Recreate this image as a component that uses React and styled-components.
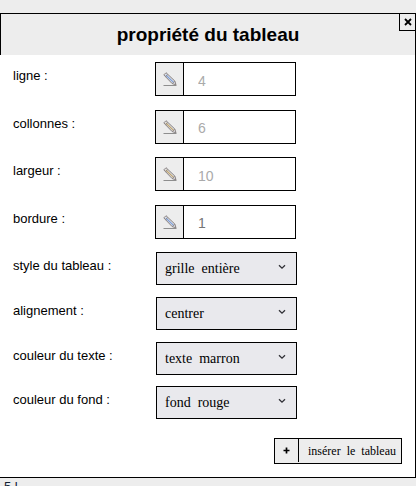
import React, { useId } from "react";
import styled, { createGlobalStyle } from "styled-components";

const GlobalStyle = createGlobalStyle`
  * { box-sizing: border-box; }
  html { background: #ededed; overflow: hidden; }
  body {
    margin: 0;
    height: 100vh;
    overflow: hidden;
    background: #ededed;
    color: #000;
    font-family: "Liberation Sans", Arial, sans-serif;
    font-size: 13px;
  }
`;

const Page = styled.main`
  padding-top: 13px;
`;

const Dialog = styled.form`
  position: relative;
  background: #fff;
  border: 1px solid #000;
  border-left: 0;
`;

const Header = styled.header`
  padding: 9px 0;
  border-left: 1px solid #000;
  background: #ededed;
`;

const Title = styled.h1`
  margin: 0;
  font-size: 19px;
  line-height: 23px;
  text-align: center;
`;

const CloseButton = styled.button`
  position: absolute;
  top: 0;
  right: 0;
  display: flex;
  align-items: center;
  justify-content: center;
  width: 16px;
  height: 17px;
  padding: 0 0 1px;
  border: solid #000;
  border-width: 0 0 1px 1px;
  background: #ededed;
`;

const Fields = styled.div`
  padding: 7px 12px 0 13px;
`;

const Group = styled.div`
  display: grid;
  grid-auto-rows: 1fr;
  min-height: ${(p) => p.$height};
`;

const Row = styled.div`
  display: grid;
  grid-template-columns: 142px 142px;
  align-items: start;
`;

const Label = styled.label`
  line-height: 28px;
`;

const InputBox = styled.div`
  display: flex;
  width: 141px;
  height: 34px;
  border: 1px solid #000;
  background: #fff;
`;

const IconCell = styled.span`
  display: flex;
  align-items: center;
  justify-content: center;
  flex: none;
  width: 28px;
  border-right: 1px solid #000;
  background: #ededed;
`;

const NumberInput = styled.input`
  flex: 1;
  min-width: 0;
  padding: 3px 8px 0 14px;
  border: 0;
  background: transparent;
  color: #757575;
  font: 14px "Liberation Sans", Arial, sans-serif;

  &::placeholder {
    color: #aaa;
    opacity: 1;
  }
`;

const SelectBox = styled.div`
  display: grid;
  margin-left: 1px;
  height: 33px;
  align-items: center;
  border: 1px solid #000;
  background: #e9e9ed;

  > * { grid-area: 1 / 1; }
  > svg { justify-self: end; margin: 0 10px 3px 0; pointer-events: none; }
`;

const Select = styled.select`
  appearance: none;
  width: 100%;
  height: 100%;
  padding: 0 28px 0 8px;
  border: 0;
  background: transparent;
  color: #000;
  font: 14px "Liberation Serif", "Times New Roman", serif;
`;

const Actions = styled.div`
  display: flex;
  justify-content: flex-end;
  padding: 7px 13px 13px;
`;

const InsertButton = styled.button`
  display: flex;
  height: 26px;
  padding: 0;
  border: 1px solid #000;
  background: #ededed;
  color: #000;
  font: 12px/24px "Liberation Serif", "Times New Roman", serif;
  white-space: pre;
`;

const PlusCell = styled.span`
  display: flex;
  align-items: center;
  justify-content: center;
  width: 24px;
  height: 23px;
  border-right: 1px solid #000;
`;

const ButtonText = styled.span`
  padding: 0 5px 0 9px;
`;

const Status = styled.footer`
  padding: 1px 4px;
  color: #123;
  line-height: 15px;
  white-space: nowrap;
`;

function Pencil({ tint }) {
  return (
    <svg width="14" height="14" viewBox="0 0 14 14" fill="none" aria-hidden="true">
      <path d="M.8 2.9 3 .7 11.8 9 13 12.8 9.2 11.6Z" fill="#e0e2e6" stroke="#878080" strokeWidth="1" />
      <path d="M2.8 3 10.8 10.6" stroke={tint} strokeWidth="1.2" />
      <path d="M4.8 2.5 2.6 4.7M11.8 9 9.2 11.6" stroke="#878080" strokeWidth=".8" />
      <path d="M.5 13.5H13.5" stroke="#8e8e8e" />
    </svg>
  );
}

function NumberField({ label, tint, ...input }) {
  const id = useId();
  return (
    <Row>
      <Label htmlFor={id}>{label}</Label>
      <InputBox>
        <IconCell><Pencil tint={tint} /></IconCell>
        <NumberInput id={id} type="text" inputMode="numeric" {...input} />
      </InputBox>
    </Row>
  );
}

function SelectField({ label, option }) {
  const id = useId();
  return (
    <Row>
      <Label htmlFor={id}>{label}</Label>
      <SelectBox>
        <Select id={id}><option>{option}</option></Select>
        <svg width="8" height="6" viewBox="0 0 8 6" fill="none" aria-hidden="true">
          <path d="m1 1.2 3 3 3-3" stroke="#303036" strokeWidth="1.3" />
        </svg>
      </SelectBox>
    </Row>
  );
}

export default function App() {
  return (
    <>
      <GlobalStyle />
      <Page>
        <Dialog onSubmit={(e) => e.preventDefault()}>
          <Header>
            <Title>propriété du tableau</Title>
          </Header>
          <CloseButton type="button" aria-label="fermer">
            <svg width="8" height="8" viewBox="0 0 8 8" aria-hidden="true">
              <path d="m1 1 6 6M7 1 1 7" stroke="#000" strokeWidth="1.8" />
            </svg>
          </CloseButton>
          <Fields>
            <Group $height="190px">
              <NumberField label="ligne :" placeholder="4" tint="#7f9fd8" />
              <NumberField label="collonnes :" placeholder="6" tint="#c0a570" />
              <NumberField label="largeur :" placeholder="10" tint="#c0a570" />
              <NumberField label="bordure :" defaultValue="1" tint="#7f9fd8" />
            </Group>
            <Group $height="179px">
              <SelectField label="style du tableau :" option={"grille\u00a0 entière"} />
              <SelectField label="alignement :" option="centrer" />
              <SelectField label="couleur du texte :" option={"texte\u00a0 marron"} />
              <SelectField label="couleur du fond :" option={"fond\u00a0 rouge"} />
            </Group>
          </Fields>
          <Actions>
            <InsertButton type="submit">
              <PlusCell>
                <svg width="7" height="7" viewBox="0 0 7 7" aria-hidden="true">
                  <path d="M3.5.5v6M.5 3.5h6" stroke="#000" strokeWidth="1.7" />
                </svg>
              </PlusCell>
              <ButtonText>{"insérer  le  tableau"}</ButtonText>
            </InsertButton>
          </Actions>
        </Dialog>
        <Status>5 l</Status>
      </Page>
    </>
  );
}
